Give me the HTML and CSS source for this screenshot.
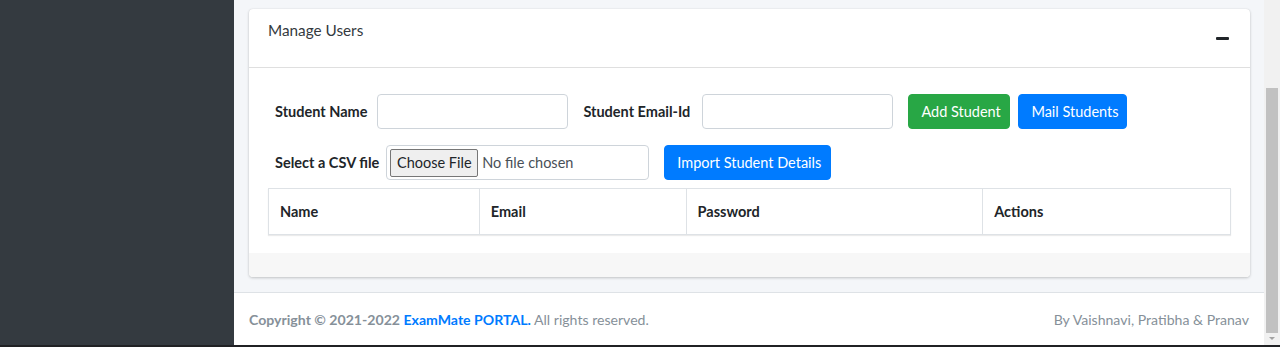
FILE: index.html
```html
<!DOCTYPE html>
<html lang="en">
<head>
<meta charset="utf-8">
<title>Manage Users</title>
<link rel="stylesheet" href="styles.css">
</head>
<body>
<div class="app">
  <aside class="sidebar"></aside>
  <div class="main">
    <div class="content">
      <section class="card">
        <header class="card-header">
          <h3 class="card-title">Manage Users</h3>
          <button class="btn-tool" aria-label="Collapse"><span class="minus"></span></button>
        </header>
        <div class="card-body">
          <form class="form-row">
            <label class="lbl lbl-name">Student Name</label>
            <input class="input input-name" type="text">
            <label class="lbl lbl-email">Student Email-Id</label>
            <input class="input input-email" type="text">
            <button type="button" class="btn btn-success">Add Student</button>
            <button type="button" class="btn btn-primary">Mail Students</button>
          </form>
          <form class="form-row row2">
            <label class="lbl">Select a CSV file</label>
            <div class="file-input">
              <span class="file-btn">Choose File</span>
              <span class="file-text">No file chosen</span>
            </div>
            <button type="button" class="btn btn-primary btn-import">Import Student Details</button>
          </form>
          <table class="table">
            <thead>
              <tr>
                <th class="c-name">Name</th>
                <th class="c-email">Email</th>
                <th class="c-pass">Password</th>
                <th class="c-act">Actions</th>
              </tr>
            </thead>
          </table>
        </div>
        <div class="card-footer"></div>
      </section>
    </div>
    <footer class="footer">
      <div><strong>Copyright © 2021-2022 <a href="#">ExamMate PORTAL.</a></strong> All rights reserved.</div>
      <div>By Vaishnavi, Pratibha &amp; Pranav</div>
    </footer>
  </div>
  <div class="scrollbar">
    <div class="track"></div>
    <div class="thumb"></div>
    <div class="arrow"></div>
  </div>
</div>
<div class="taskbar"></div>
</body>
</html>
```
FILE: styles.css
```css
* { box-sizing: border-box; }
html, body { margin: 0; padding: 0; height: 100%; }
body {
  font-family: Lato, "Noto Sans", sans-serif;
  font-size: 15px;
  color: #212529;
  background: #f4f6f9;
  overflow: hidden;
}
.app {
  display: flex;
  height: 345px;
}
.sidebar {
  width: 234px;
  flex: none;
  background: #343a40;
}
.main {
  flex: 1;
  display: flex;
  flex-direction: column;
  background: #f4f6f9;
}
.content {
  flex: 1;
  padding: 9px 14px 0 15px;
}
.card {
  background: #fff;
  border-radius: 4px;
  box-shadow: 0 0 1px rgba(0,0,0,.125), 0 1px 3px rgba(0,0,0,.2);
  overflow: hidden;
}
.card-header {
  height: 59px;
  display: flex;
  justify-content: space-between;
  align-items: flex-start;
  padding: 0 20px 0 19px;
  border-bottom: 1px solid rgba(0,0,0,.125);
}
.card-title {
  margin: 11px 0 0;
  font-size: 15.3px;
  font-weight: 400;
  color: #343a40;
  line-height: 20px;
}
.btn-tool {
  margin-top: 20px;
  width: 30px;
  height: 18px;
  border: 0;
  background: transparent;
  padding: 0;
  display: flex;
  justify-content: flex-end;
  align-items: center;
}
.minus {
  display: block;
  width: 13px;
  height: 3px;
  background: #212529;
  border-radius: 1px;
  margin-right: 1px;
}
.card-body {
  padding: 26px 19px 18px 19px;
}
.form-row {
  display: flex;
  align-items: center;
  padding-left: 7px;
  height: 35px;
}
.row2 { margin-top: 16px; }
.lbl {
  font-weight: 700;
  font-size: 14.5px;
  margin-right: 8px;
  white-space: nowrap;
}
.lbl-name { margin-right: 10px; }
.lbl-email {
  margin-left: 15px;
  width: 112px;
  margin-right: 7px;
}
.input {
  height: 35px;
  border: 1px solid #ced4da;
  border-radius: 4px;
  background: #fff;
  padding: 0 12px;
  font: inherit;
}
.input-name { width: 191px; }
.input-email { width: 191px; }
.btn {
  height: 35px;
  border: 1px solid transparent;
  border-radius: 4px;
  color: #fff;
  font-family: inherit;
  font-size: 14.5px;
  padding: 0 12px;
  white-space: nowrap;
  cursor: pointer;
}
.btn-success {
  background: #28a745;
  border-color: #28a745;
  margin-left: 15px;
  width: 102px;
}
.btn-primary {
  background: #007bff;
  border-color: #007bff;
}
.form-row .btn-success + .btn-primary {
  margin-left: 8px;
  width: 109px;
}
.file-input {
  width: 263px;
  height: 35px;
  border: 1px solid #ced4da;
  border-radius: 4px;
  display: flex;
  align-items: center;
  padding-left: 3px;
  margin-left: -1px;
}
.file-btn {
  height: 28px;
  width: 88px;
  background: #efefef;
  border: 1px solid #767676;
  border-radius: 2px;
  display: flex;
  align-items: center;
  justify-content: center;
  font-size: 14.5px;
  color: #212529;
}
.file-text {
  margin-left: 4px;
  font-size: 14.5px;
  color: #495057;
}
.btn-import {
  margin-left: 15px;
  width: 167px;
}
.table {
  width: 963px;
  margin-top: 8px;
  border-collapse: collapse;
  box-shadow: 0 1px 1px rgba(0,0,0,.08);
}
.table th {
  border: 1px solid #dee2e6;
  height: 46px;
  text-align: left;
  padding: 0 11px;
  font-size: 14.5px;
  font-weight: 700;
  color: #212529;
}
.c-name { width: 211px; }
.c-email { width: 207px; }
.c-pass { width: 297px; }
.c-act { width: 248px; }
.card-footer {
  height: 24px;
  background: #f7f7f7;
}
.footer {
  height: 53px;
  background: #fff;
  border-top: 1px solid #dee2e6;
  display: flex;
  justify-content: space-between;
  align-items: center;
  padding: 0 15px;
  color: #869099;
  font-size: 14.1px;
}
.footer strong { font-weight: 700; }
.footer a { color: #007bff; text-decoration: none; }
.scrollbar {
  width: 16px;
  flex: none;
  display: flex;
  flex-direction: column;
  background: #f1f1f1;
}
.track { height: 88px; }
.thumb {
  flex: 1;
  background: #c1c1c1;
  margin: 0 2px;
}
.arrow {
  height: 12px;
  position: relative;
}
.arrow::after {
  content: "";
  position: absolute;
  left: 5px;
  top: 4px;
  border-left: 3px solid transparent;
  border-right: 3px solid transparent;
  border-top: 3px solid #a3a3a3;
}
.taskbar {
  height: 2px;
  background: #202124;
}
```
